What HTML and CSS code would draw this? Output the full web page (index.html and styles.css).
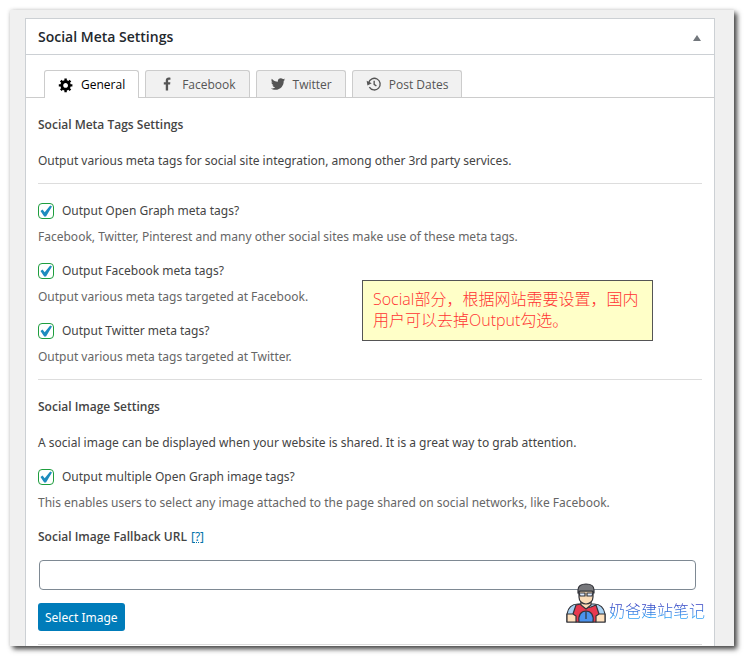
FILE: index.html
```
<!DOCTYPE html>
<html lang="en">
<head>
	<meta charset="UTF-8">
	<title>Social Meta Settings</title>
	<link rel="stylesheet" href="styles.css">
</head>
<body>
	<div class="screen">
		<div class="postbox">
			<div class="header">
				<h2>Social Meta Settings</h2>
				<button type="button" class="toggle" aria-label="Toggle panel"><svg width="8" height="6" viewBox="0 0 8 6"><path d="M4 0L8 6H0z"/></svg></button>
			</div>
			<div class="tabs" role="tablist">
				<button type="button" role="tab" class="tab active" aria-selected="true">
					<svg width="16" height="16" viewBox="0 0 20 20"><path fill-rule="evenodd" d="M18 12h-2.180c-.17.7-.44 1.350-.81 1.930l1.540 1.540-2.100 2.100-1.540-1.540c-.58.36-1.230.63-1.910.79V19H8v-2.180c-.68-.16-1.330-.43-1.910-.79l-1.540 1.540-2.120-2.120 1.540-1.540c-.36-.58-.63-1.230-.79-1.910H1V9.030h2.170c.16-.7.44-1.350.8-1.940L2.430 5.550l2.100-2.100 1.540 1.540c.58-.37 1.240-.64 1.930-.81V2h3v2.180c.68.16 1.330.43 1.910.79l1.540-1.540 2.120 2.120-1.540 1.540c.36.59.64 1.240.8 1.940H18V12zm-8.500 1.500c1.660 0 3-1.340 3-3s-1.340-3-3-3-3 1.340-3 3 1.340 3 3 3z"/></svg>
					<span>General</span>
				</button>
				<button type="button" role="tab" class="tab">
					<svg width="16" height="16" viewBox="0 0 20 20"><path d="M8.460 18h2.930v-7.300h2.450l.37-2.840h-2.820V6.040c0-.82.230-1.380 1.410-1.380h1.510V2.110c-.26-.03-1.150-.11-2.190-.11-2.180 0-3.660 1.330-3.660 3.760v2.100H6v2.840h2.460V18z"/></svg>
					<span>Facebook</span>
				</button>
				<button type="button" role="tab" class="tab">
					<svg width="16" height="16" viewBox="0 0 20 20"><path d="M18.940 4.460c-.49.730-1.110 1.380-1.830 1.900.010.150.010.310.010.470 0 4.850-3.690 10.440-10.430 10.440-2.070 0-4-.61-5.630-1.650.29.030.580.050.880.050 1.720 0 3.300-.59 4.550-1.570-1.600-.03-2.950-1.090-3.420-2.550.22.040.450.070.690.070.33 0 .66-.05.960-.13-1.670-.34-2.940-1.820-2.940-3.600v-.04c.5.270 1.060.440 1.660.460-.98-.66-1.630-1.780-1.630-3.060 0-.67.180-1.300.500-1.840 1.810 2.220 4.510 3.680 7.560 3.830-.06-.27-.1-.55-.1-.84 0-2.020 1.650-3.660 3.670-3.660 1.060 0 2.010.44 2.680 1.160.83-.17 1.620-.47 2.330-.89-.28.85-.86 1.570-1.620 2.020.75-.08 1.450-.28 2.110-.57z"/></svg>
					<span>Twitter</span>
				</button>
				<button type="button" role="tab" class="tab">
					<svg width="16" height="16" viewBox="0 0 20 20"><path d="M3.300 8.500A7.300 7.300 0 1 1 4.200 14M10.200 6v4.500l2.800 2" fill="none" stroke="#555" stroke-width="1.700"/><path d="M.8 5.800l6.400 3.400-5.400 2.800z"/></svg>
					<span>Post Dates</span>
				</button>
			</div>
			<form class="inside">
				<h4>Social Meta Tags Settings</h4>
				<p class="intro">Output various meta tags for social site integration, among other 3rd party services.</p>
				<hr>
				<div class="fields">
					<label><input type="checkbox" checked>Output Open Graph meta tags?</label>
					<p class="description">Facebook, Twitter, Pinterest and many other social sites make use of these meta tags.</p>
					<label><input type="checkbox" checked>Output Facebook meta tags?</label>
					<p class="description">Output various meta tags targeted at Facebook.</p>
					<label><input type="checkbox" checked>Output Twitter meta tags?</label>
					<p class="description">Output various meta tags targeted at Twitter.</p>
				</div>
				<hr>
				<h4>Social Image Settings</h4>
				<p class="intro">A social image can be displayed when your website is shared. It is a great way to grab attention.</p>
				<label><input type="checkbox" checked>Output multiple Open Graph image tags?</label>
				<p class="description">This enables users to select any image attached to the page shared on social networks, like Facebook.</p>
				<div class="url_title">
					<label for="fallback">Social Image Fallback URL</label>
					<a href="#help">[<span>?</span>]</a>
				</div>
				<input type="text" class="url" id="fallback">
				<button type="button" class="select">Select Image</button>
				<hr>
			</form>
		</div>
		<div class="note" lang="zh">Social部分，根据网站需要设置，国内用户可以去掉Output勾选。</div>
		<div class="watermark" lang="zh">
			<svg width="40" height="40" viewBox="0 0 40 40" stroke="#33343a" stroke-width="1.200" stroke-linejoin="round">
				<path fill="#a9d3f5" d="M1 31C2 25 6 21 12 21h16c6 0 10 4 11 10v8H1z"/>
				<path fill="#e8394f" d="M10 22l5-1 5 4 5-1 5-2 3 9-3 8H10L7 31z"/>
				<path fill="#fbdcb8" d="M15 18h10v4l-5 4-5-4z"/>
				<path fill="#fbdcb8" d="M13 8h14v6c0 4-3 7-7 7s-7-3-7-7z"/>
				<path fill="#77787c" d="M12 10V7c0-4 3-6 8-6s8 2 8 6v3l-2-2H14z"/>
				<path fill="#dce9ff" d="M13 10h6v3h-5zM21 10h6l-1 3h-5z"/>
				<path fill="#ffe1bd" d="M1 31h6l3 2v6H1zM39 31h-6l-3 2v6h9z"/>
				<path fill="#4b93ee" d="M13 39c-1-7 2-11 7-11s8 4 7 11z"/>
				<path fill="none" d="M20 28v8"/>
			</svg>
			<span>奶爸建站笔记</span>
		</div>
	</div>
</body>
</html>
```
FILE: styles.css
```
*{
	box-sizing: border-box;
}
body{
	margin:0;
	padding:10px 11px 11px 10px;
	background: #fff;
	color:#444;
	font-family: "Noto Sans", "Noto Sans CJK SC", sans-serif;
	font-size:12px;
	line-height: 20px;
}
h2, h4, p{
	margin:0;
}
button, input{
	font-family: inherit;
	font-size: inherit;
}
.screen{
	position: relative;
	padding:8px 19px 0 15px;
	background: #f0f0f0;
	box-shadow: 3px 3px 5px #444, 0 0 4px #ddd;
}
.postbox{
	border:1px solid #ccd0d4;
	border-bottom:0;
	background: #fff;
}
.header{
	display: flex;
	justify-content: space-between;
	align-items: center;
	height:36px;
	padding:0 13px 0 12px;
	border-bottom:1px solid #ccd0d4;
}
.header h2{
	color:#23282d;
	font-family: "Open Sans", sans-serif;
	font-size:14px;
	font-weight: 600;
}
.toggle{
	display: flex;
	padding:2px 0 0;
	border:0;
	background: none;
	fill:#72777c;
	cursor: pointer;
}
/*标签页*/
.tabs{
	display: flex;
	gap:6px;
	padding:15px 18px 0;
	border-bottom:1px solid #ccc;
}
.tab{
	display: flex;
	align-items: center;
	gap:7px;
	height:27px;
	padding:0 13px;
	border:1px solid #ccc;
	border-bottom:0;
	border-radius: 3px 3px 0 0;
	background: #f1f1f1;
	color:#555;
	fill:#555;
	font-family: "Open Sans", sans-serif;
	font-weight: 500;
	cursor: pointer;
}
.tab.active{
	height:28px;
	margin-bottom:-1px;
	background: #fff;
	color:#000;
	fill:#000;
}
.inside{
	padding:17px 12px 1px;
}
.inside h4{
	margin-bottom:16px;
	font-family: "Open Sans", sans-serif;
	font-size:12px;
	font-weight: 600;
}
hr{
	margin:0 0 17px;
	border:0;
	border-top:1px solid #ddd;
}
.intro{
	margin-bottom:12px;
}
.inside label{
	display: flex;
	align-items: center;
}
.intro + label{
	margin-top:14px;
}
.description{
	margin:6px 0 14px;
	color:#666;
}
.fields{
	margin-bottom:12px;
}
.fields .description:last-child{
	margin-bottom:0;
}
input[type=checkbox]{
	appearance: none;
	width:16px;
	height:16px;
	margin:0 8px 0 0;
	border:1px solid #1e9e3e;
	border-radius: 4px;
	background: #fff url("data:image/svg+xml,%3Csvg xmlns='http://www.w3.org/2000/svg' viewBox='0 0 14 14'%3E%3Cpath d='M1.500 7l2-1.500 2.200 2.700L11.200 1.500l1.800 1-6 10H5.200z' fill='%231e8cbe'/%3E%3C/svg%3E") center no-repeat;
}
.url_title{
	display: flex;
	gap:4px;
}
.url_title label{
	font-family: "Open Sans", sans-serif;
	font-weight: 600;
}
.url_title a{
	color:#0073aa;
	text-decoration: none;
}
.url_title span{
	text-decoration: underline dotted;
}
.url{
	display: block;
	width:calc(100% - 7px);
	height:30px;
	margin:13px 0 13px 1px;
	padding:0 8px;
	border:1px solid #7e8993;
	border-radius: 4px;
}
.select{
	display: block;
	height:28px;
	margin-bottom:13px;
	padding:0 7px;
	border:0;
	border-radius: 3px;
	background: #007cba;
	color:#fff;
	cursor: pointer;
}
.inside hr:last-child{
	margin:0;
}
/*批注*/
.note{
	position: absolute;
	left:352px;
	top:270px;
	width:291px;
	padding:8px 10px 9px;
	border:1px solid #555;
	background: #ffffc8;
	color:#f33;
	font-family: "Open Sans", "Noto Sans CJK SC", sans-serif;
	font-size:16px;
	font-weight: 300;
	line-height: 21px;
}
/*水印*/
.watermark{
	position: absolute;
	right:29px;
	bottom:23px;
	display: flex;
	align-items: center;
	gap:3px;
}
.watermark span{
	padding-top:16px;
	background: linear-gradient(#33b 50%, #2a9df4 90%);
	-webkit-background-clip: text;
	background-clip: text;
	color:transparent;
	font-size:16px;
	font-weight: 300;
}
```
